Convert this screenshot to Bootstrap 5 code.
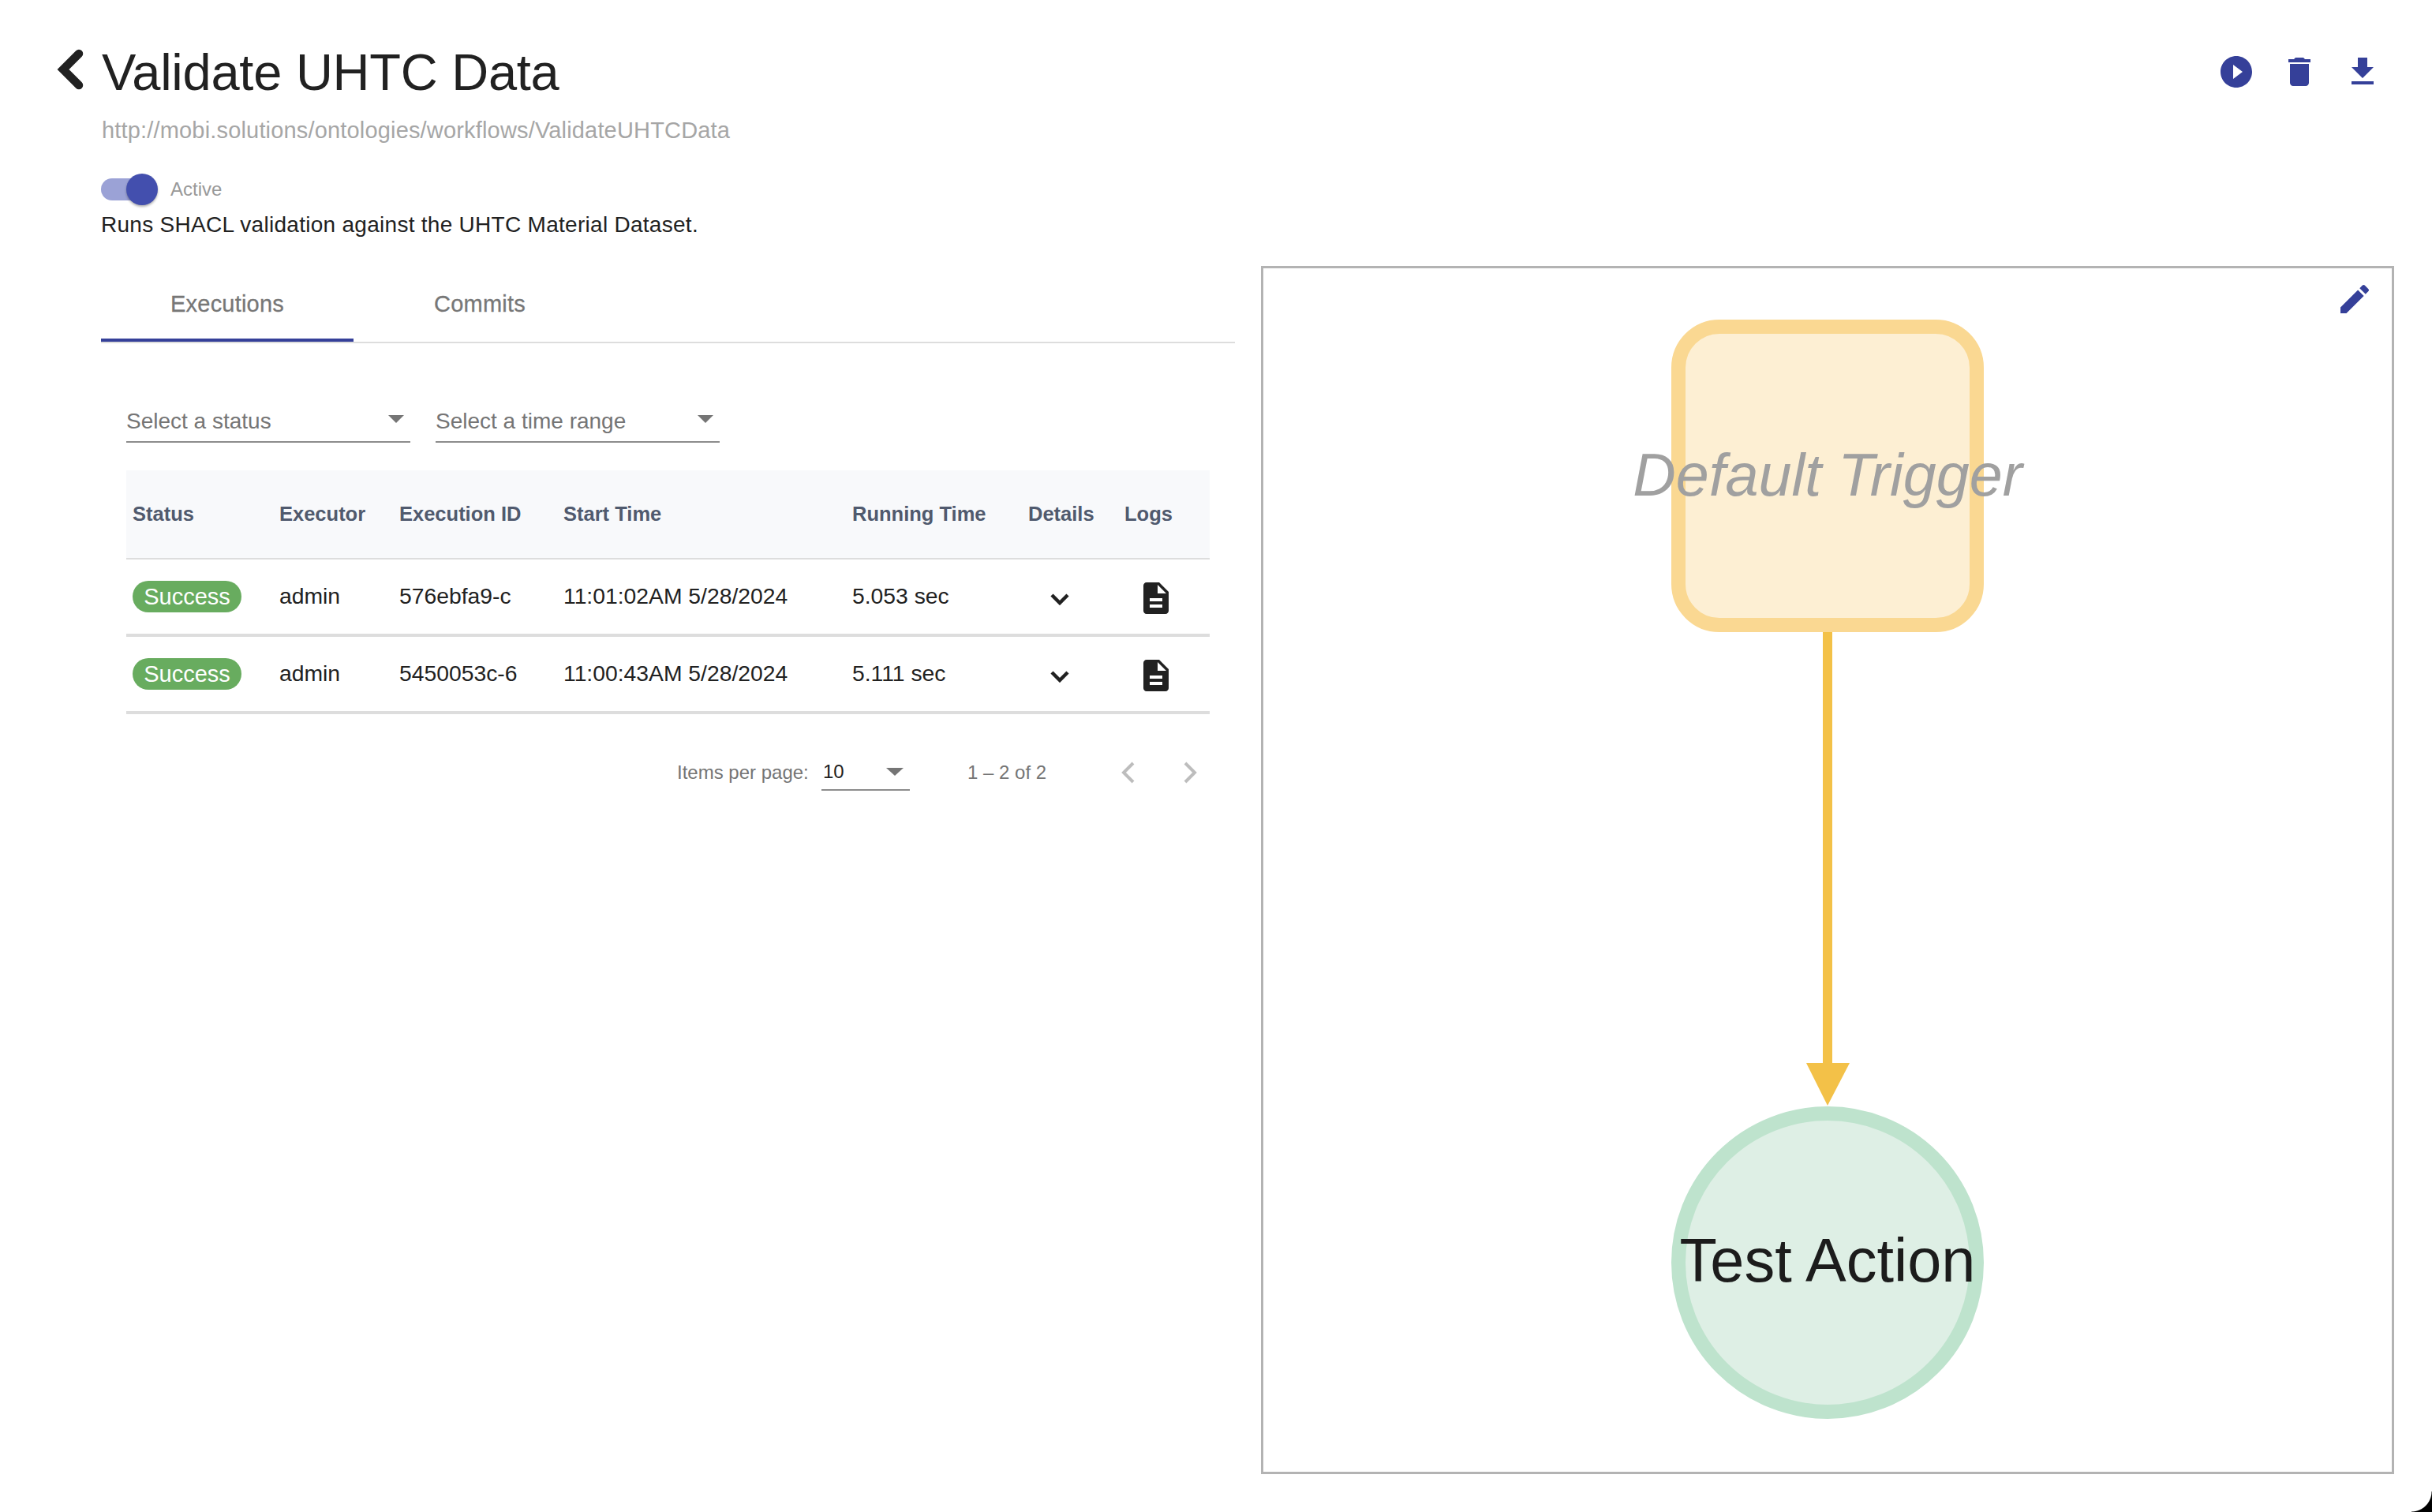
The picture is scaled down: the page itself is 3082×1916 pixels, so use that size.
<!DOCTYPE html>
<html lang="en">
<head>
    <meta charset="UTF-8">
    <meta name="viewport" content="width=device-width, initial-scale=1.0">
    <title>Validate UHTC Data</title>
    <link href="https://cdn.jsdelivr.net/npm/bootstrap@5.3.3/dist/css/bootstrap.min.css" rel="stylesheet">
    <style>
        html, body {
            height: 100%;
        }
        body {
            background: #fff;
            font-family: "Liberation Sans", Arial, sans-serif;
            color: #212121;
            font-size: 28px;
            line-height: 1.2;
        }
        .page-wrap {
            position: relative;
            width: 3082px;
            height: 1916px;
            padding: 48px 48px 0 73px;
            overflow: hidden;
        }
        .wf-head {
            height: 289px;
        }
        .back-icon {
            width: 36px;
            height: 54px;
            margin: 14px 21px 0 -1px;
            flex: none;
        }
        .wf-title {
            font-size: 65px;
            font-weight: 400;
            letter-spacing: -.25px;
            line-height: 80px;
            margin: 4px 0 0 0;
        }
        .wf-iri {
            color: #a6a6a6;
            font-size: 29px;
            letter-spacing: .17px;
            line-height: 34px;
            margin: 16px 0 0 56px;
        }
        .wf-toggle {
            margin: 38px 0 0 55px;
            height: 40px;
        }
        .toggle-track {
            position: relative;
            width: 62px;
            height: 28px;
            border-radius: 14px;
            background: #9ba2d6;
            margin-right: 16px;
        }
        .toggle-thumb {
            position: absolute;
            top: -6px;
            left: 32px;
            width: 40px;
            height: 40px;
            border-radius: 50%;
            background: #434fae;
            box-shadow: 0 2px 3px rgba(0, 0, 0, .3);
        }
        .toggle-text {
            color: #999;
            font-size: 24px;
            margin-left: 10px;
        }
        .wf-desc {
            margin: 7px 0 0 55px;
            letter-spacing: .28px;
            line-height: 36px;
        }
        .act-btn {
            width: 80px;
            height: 48px;
            padding: 0 16px;
            border: 0;
            background: none;
            display: block;
        }
        .act-btn svg, .edit-btn svg {
            width: 48px;
            height: 48px;
            fill: #354099;
            display: block;
        }
        .act-row {
            margin-top: 19px;
            height: 48px;
        }
        .wf-body {
            height: 1531px;
            padding-left: 55px;
        }
        .left-col {
            width: 1437px;
            flex: none;
        }
        .tab-bar {
            border-bottom: 2px solid #ddd;
        }
        .tab-item {
            width: 320px;
            height: 96px;
            color: #777;
            font-size: 29px;
            letter-spacing: .2px;
            -webkit-text-stroke: .3px #777;
        }
        .tab-item.on {
            box-shadow: inset 0 -4px 0 #354099;
        }
        .tab-pane-in {
            padding: 0 32px;
        }
        .filter-row {
            gap: 32px;
            padding-top: 75px;
            margin-bottom: 35px;
        }
        .fake-select {
            width: 360px;
            height: 51px;
            border-bottom: 2px solid #8c8c8c;
            color: #757575;
            padding-bottom: 8px;
            padding-right: 8px;
        }
        .sel-arrow {
            width: 0;
            height: 0;
            border-left: 10px solid transparent;
            border-right: 10px solid transparent;
            border-top: 10px solid #757575;
        }
        .exec-table {
            width: 1373px;
            table-layout: fixed;
            border-collapse: separate;
            border-spacing: 0;
        }
        .exec-table th {
            height: 113px;
            padding: 0 8px;
            background: #f8f9fb;
            color: #505a6e;
            font-size: 25.5px;
            font-weight: 700;
            border-bottom: 2px solid #ddd;
            vertical-align: middle;
        }
        .exec-table td {
            height: 98px;
            padding: 0 8px;
            border-bottom: 4px solid #ddd;
            vertical-align: middle;
            color: #212121;
            font-size: 28.3px;
        }
        .status-pill {
            display: inline-block;
            width: 138px;
            height: 40px;
            line-height: 40px;
            border-radius: 20px;
            background: #68ac5f;
            color: #fff;
            text-align: center;
            font-size: 29px;
        }
        .row-chev {
            width: 24px;
            height: 15px;
            display: block;
            margin: 6px 0 0 28px;
        }
        .row-doc {
            width: 48px;
            height: 48px;
            fill: #212121;
            display: block;
            margin: 4px 0 0 16px;
        }
        .pager {
            color: #757575;
            font-size: 24px;
            height: 46px;
            margin-top: 51px;
            padding-right: 15px;
        }
        .pager-label {
            margin-left: 698px;
            width: 183px;
        }
        .pager-size {
            width: 112px;
            height: 46px;
            border-bottom: 2px solid #8c8c8c;
            color: #212121;
            padding: 3px 8px 3px 2px;
        }
        .pager-size .sel-arrow {
            border-left-width: 11px;
            border-right-width: 11px;
        }
        .pager-range {
            margin-left: 73px;
            width: 194px;
        }
        .pager-nav {
            width: 18px;
            height: 28px;
            display: block;
        }
        .graph-box {
            position: relative;
            width: 1436px;
            height: 1531px;
            margin-left: 33px;
            border: 3px solid #b3b3b3;
        }
        .graph-box > svg.graph {
            display: block;
            width: 1430px;
            height: 1525px;
        }
        .edit-btn {
            position: absolute;
            top: 15px;
            right: 23px;
        }
        .node-label {
            font-family: "Liberation Sans", Arial, sans-serif;
        }
        .node-trigger {
            font-size: 75.5px;
            font-style: italic;
            fill: #a0a0a0;
        }
        .node-action {
            font-size: 77.5px;
            fill: #1c1c1c;
        }
        .win-corner {
            position: absolute;
            right: 0;
            bottom: 0;
            width: 26px;
            height: 26px;
            background: radial-gradient(circle at 0 0, transparent 25px, #000 26px);
        }
    </style>
</head>
<body>
    <div class="page-wrap">
        <div class="wf-head d-flex justify-content-between">
            <div>
                <div class="d-flex align-items-start">
                    <svg class="back-icon" viewBox="0 0 36 54"><polyline points="28,6 8,26 28,46" fill="none" stroke="#212121" stroke-width="10.5" stroke-linecap="round"/></svg>
                    <h1 class="wf-title">Validate UHTC Data</h1>
                </div>
                <div class="wf-iri">http://mobi.solutions/ontologies/workflows/ValidateUHTCData</div>
                <div class="wf-toggle d-flex align-items-center">
                    <div class="toggle-track"><div class="toggle-thumb"></div></div>
                    <span class="toggle-text">Active</span>
                </div>
                <div class="wf-desc">Runs SHACL validation against the UHTC Material Dataset.</div>
            </div>
            <div class="act-row d-flex">
                <button class="act-btn" type="button"><svg viewBox="0 0 24 24"><path d="M12 2C6.48 2 2 6.48 2 12s4.48 10 10 10 10-4.48 10-10S17.52 2 12 2zm-2 14.5v-9l6 4.5-6 4.5z"/></svg></button>
                <button class="act-btn" type="button"><svg viewBox="0 0 24 24"><path d="M6 19c0 1.1.9 2 2 2h8c1.1 0 2-.9 2-2V7H6v12zM19 4h-3.5l-1-1h-5l-1 1H5v2h14V4z"/></svg></button>
                <button class="act-btn" type="button"><svg viewBox="0 0 24 24"><path d="M19 9h-4V3H9v6H5l7 7 7-7zM5 18v2h14v-2H5z"/></svg></button>
            </div>
        </div>

        <div class="wf-body d-flex">
            <div class="left-col">
                <div class="tab-bar d-flex">
                    <div class="tab-item on d-flex align-items-center justify-content-center">Executions</div>
                    <div class="tab-item d-flex align-items-center justify-content-center">Commits</div>
                </div>
                <div class="tab-pane-in">
                    <div class="filter-row d-flex">
                        <div class="fake-select d-flex align-items-end justify-content-between">
                            <span>Select a status</span><span class="sel-arrow align-self-center"></span>
                        </div>
                        <div class="fake-select d-flex align-items-end justify-content-between">
                            <span>Select a time range</span><span class="sel-arrow align-self-center"></span>
                        </div>
                    </div>
                    <table class="exec-table">
                        <colgroup>
                            <col style="width:186px"><col style="width:152px"><col style="width:208px"><col style="width:366px"><col style="width:223px"><col style="width:122px"><col style="width:116px">
                        </colgroup>
                        <thead>
                            <tr><th>Status</th><th>Executor</th><th>Execution ID</th><th>Start Time</th><th>Running Time</th><th>Details</th><th>Logs</th></tr>
                        </thead>
                        <tbody>
                            <tr>
                                <td><span class="status-pill">Success</span></td>
                                <td>admin</td>
                                <td>576ebfa9-c</td>
                                <td>11:01:02AM 5/28/2024</td>
                                <td>5.053 sec</td>
                                <td><svg class="row-chev" viewBox="0 0 24 15"><polyline points="2,2 12,12 22,2" fill="none" stroke="#212121" stroke-width="4.5"/></svg></td>
                                <td><svg class="row-doc" viewBox="0 0 24 24"><path d="M14 2H6c-1.1 0-1.99.9-1.99 2L4 20c0 1.1.89 2 1.99 2H18c1.1 0 2-.9 2-2V8l-6-6zm2 16H8v-2h8v2zm0-4H8v-2h8v2zm-3-5V3.5L18.5 9H13z"/></svg></td>
                            </tr>
                            <tr>
                                <td><span class="status-pill">Success</span></td>
                                <td>admin</td>
                                <td>5450053c-6</td>
                                <td>11:00:43AM 5/28/2024</td>
                                <td>5.111 sec</td>
                                <td><svg class="row-chev" viewBox="0 0 24 15"><polyline points="2,2 12,12 22,2" fill="none" stroke="#212121" stroke-width="4.5"/></svg></td>
                                <td><svg class="row-doc" viewBox="0 0 24 24"><path d="M14 2H6c-1.1 0-1.99.9-1.99 2L4 20c0 1.1.89 2 1.99 2H18c1.1 0 2-.9 2-2V8l-6-6zm2 16H8v-2h8v2zm0-4H8v-2h8v2zm-3-5V3.5L18.5 9H13z"/></svg></td>
                            </tr>
                        </tbody>
                    </table>
                    <div class="pager d-flex align-items-center">
                        <span class="pager-label">Items per page:</span>
                        <div class="pager-size d-flex align-items-center justify-content-between"><span>10</span><span class="sel-arrow"></span></div>
                        <span class="pager-range">1 – 2 of 2</span>
                        <svg class="pager-nav" viewBox="0 0 18 28"><polyline points="16,2 4,14 16,26" fill="none" stroke="#bdbdbd" stroke-width="4"/></svg>
                        <svg class="pager-nav ms-auto" viewBox="0 0 18 28"><polyline points="2,2 14,14 2,26" fill="none" stroke="#bdbdbd" stroke-width="4"/></svg>
                    </div>
                </div>
            </div>

            <div class="graph-box">
                <svg class="graph" viewBox="0 0 1430 1525">
                    <line x1="715" y1="460" x2="715" y2="1010" stroke="#f3c148" stroke-width="12"/>
                    <polygon points="688,1007 743,1007 715,1061" fill="#f3c148"/>
                    <rect x="526" y="74" width="378" height="378" rx="52" fill="#fdefd3" stroke="#fad892" stroke-width="18"/>
                    <circle cx="715" cy="1260" r="189" fill="#deefe5" stroke="#bee3cd" stroke-width="18"/>
                    <text class="node-label node-trigger" x="715" y="288" text-anchor="middle">Default Trigger</text>
                    <text class="node-label node-action" x="715" y="1284" text-anchor="middle">Test Action</text>
                </svg>
                <div class="edit-btn"><svg viewBox="0 0 24 24"><path d="M3 17.25V21h3.75L17.81 9.94l-3.75-3.75L3 17.25zM20.71 7.04c.39-.39.39-1.02 0-1.41l-2.34-2.34c-.39-.39-1.02-.39-1.41 0l-1.83 1.83 3.75 3.75 1.83-1.83z"/></svg></div>
            </div>
        </div>
        <div class="win-corner"></div>
    </div>

    <script src="https://cdn.jsdelivr.net/npm/bootstrap@5.3.3/dist/js/bootstrap.bundle.min.js"></script>
</body>
</html>
